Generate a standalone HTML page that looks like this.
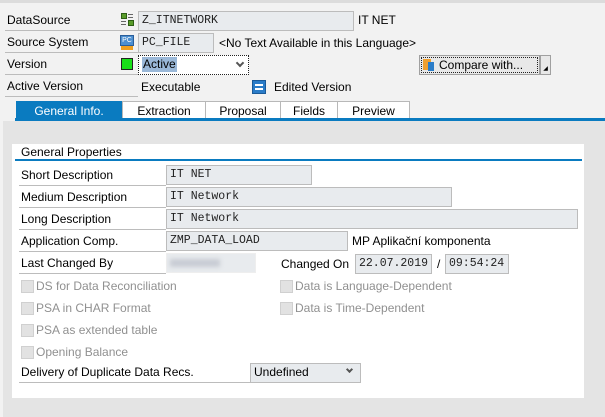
<!DOCTYPE html>
<html><head><meta charset="utf-8"><style>
*{margin:0;padding:0;box-sizing:border-box}
body{width:605px;height:417px;background:#f2f2f2;font-family:"Liberation Sans",sans-serif;font-size:12px;color:#000;position:relative;overflow:hidden}
.a{position:absolute;white-space:nowrap}
.lbl{position:absolute;border-bottom:1px solid #bcbcbc;height:21px;line-height:21px;padding-left:2px}
.fld{position:absolute;background:#e8ebee;border:1px solid #bcbcbc;height:20px;line-height:18px;padding-left:3px;font-family:"Liberation Mono",monospace;font-size:11.5px;color:#222}
.tab{position:absolute;top:101px;height:18px;line-height:18px;text-align:center;border:1px solid #b8b8b8;border-bottom:none;background:#fff}
.cb{position:absolute;width:13px;height:13px;background:#e2e2e2;border:1px solid #d0d0d0}
.g{color:#909090}
.chev{position:absolute;width:6px;height:6px;border-right:2px solid #555;border-bottom:2px solid #555;transform:rotate(45deg)}
</style></head><body>
<div class="a" style="left:0;top:0;width:605px;height:3px;background:#dcdcdc"></div>
<div class="lbl" style="left:5px;top:10px;width:133px">DataSource</div>
<div class="lbl" style="left:5px;top:32px;width:133px">Source System</div>
<div class="lbl" style="left:5px;top:54px;width:133px">Version</div>
<div class="lbl" style="left:5px;top:76px;width:133px">Active Version</div>
<div class="a" style="left:121px;top:13px;width:6px;height:6px;background:#5a9c2a;border:1px solid #2d5e14"></div>
<div class="a" style="left:128px;top:20px;width:6px;height:6px;background:#5a9c2a;border:1px solid #2d5e14"></div>
<div class="a" style="left:128px;top:14px;width:5px;height:4px;border-top:1px solid #666;border-bottom:1px solid #666"></div>
<div class="a" style="left:121px;top:21px;width:5px;height:4px;border-top:1px solid #666;border-bottom:1px solid #666"></div>
<div class="a" style="left:120px;top:35px;width:14px;height:11px;background:#4c8fd0;border:1px solid #2a5e9a;color:#fff;font-size:7px;line-height:9px;text-align:center">PC</div>
<div class="a" style="left:121px;top:46px;width:12px;height:4px;background:#f0a020"></div>
<div class="a" style="left:121px;top:58px;width:12px;height:12px;background:#18e018;border:1px solid #222"></div>
<div class="fld" style="left:138px;top:11px;width:216px">Z_ITNETWORK</div>
<div class="a" style="left:358px;top:13px">IT NET</div>
<div class="fld" style="left:138px;top:33px;width:76px">PC_FILE</div>
<div class="a" style="left:219px;top:36px">&lt;No Text Available in this Language&gt;</div>
<div class="a" style="left:138px;top:55px;width:111px;height:20px;background:#fff;border:1px dotted #222"></div>
<div class="a" style="left:142px;top:57px;height:15px;line-height:15px;background:#9ab8d8;padding:0 1px">Active</div>
<div class="chev" style="left:237px;top:60px"></div>
<div class="a" style="left:419px;top:55px;width:121px;height:20px;border:1px solid #a0a0a0;background:#e8e8e8"></div>
<div class="a" style="left:421px;top:57px;width:117px;height:16px;border:1px dotted #222"></div>
<div class="a" style="left:423px;top:59px;width:8px;height:11px;background:#f0a030"></div>
<div class="a" style="left:428px;top:62px;width:6px;height:9px;background:#2a7cc8"></div>
<div class="a" style="left:439px;top:58px">Compare with...</div>
<div class="a" style="left:540px;top:55px;width:11px;height:20px;border:1px solid #a0a0a0;background:#e8e8e8;font-size:6px;line-height:26px;text-align:center">&#9698;</div>
<div class="a" style="left:141px;top:80px">Executable</div>
<div class="a" style="left:252px;top:80px;width:14px;height:14px;background:#2a7cc8;border:1px solid #1a5a98"></div>
<div class="a" style="left:255px;top:84px;width:8px;height:2px;background:#fff"></div>
<div class="a" style="left:255px;top:88px;width:8px;height:2px;background:#fff"></div>
<div class="a" style="left:274px;top:80px">Edited Version</div>
<div class="tab" style="left:16px;width:106px;background:#0a7bc0;color:#fff;border-color:#0a7bc0">General Info.</div>
<div class="tab" style="left:122px;width:84px">Extraction</div>
<div class="tab" style="left:205px;width:76px">Proposal</div>
<div class="tab" style="left:280px;width:58px">Fields</div>
<div class="tab" style="left:337px;width:73px">Preview</div>
<div class="a" style="left:15px;top:118px;width:590px;height:3px;background:#0a7bc0"></div>
<div class="a" style="left:3px;top:121px;width:602px;height:296px;background:#e4e4e4"></div>
<div class="a" style="left:12px;top:144px;width:572px;height:254px;background:#fff"></div>
<div class="a" style="left:21px;top:145px">General Properties</div>
<div class="a" style="left:15px;top:159px;width:567px;height:2px;background:#0a7bc0"></div>
<div class="lbl" style="left:19px;top:165px;width:147px">Short Description</div>
<div class="lbl" style="left:19px;top:187px;width:147px">Medium Description</div>
<div class="lbl" style="left:19px;top:209px;width:147px">Long Description</div>
<div class="lbl" style="left:19px;top:231px;width:147px">Application Comp.</div>
<div class="lbl" style="left:19px;top:253px;width:147px">Last Changed By</div>
<div class="fld" style="left:166px;top:165px;width:146px">IT NET</div>
<div class="fld" style="left:166px;top:187px;width:286px">IT Network</div>
<div class="fld" style="left:166px;top:209px;width:412px">IT Network</div>
<div class="fld" style="left:166px;top:231px;width:182px">ZMP_DATA_LOAD</div>
<div class="a" style="left:352px;top:234px">MP Aplikační komponenta</div>
<div class="fld" style="left:166px;top:253px;width:90px;border-color:#eee"></div>
<div class="a" style="left:170px;top:259px;width:50px;height:8px;background:#c8ccd4;filter:blur(2px)"></div>
<div class="a" style="left:281px;top:257px">Changed On</div>
<div class="fld" style="left:355px;top:254px;width:77px">22.07.2019</div>
<div class="a" style="left:437px;top:257px">/</div>
<div class="fld" style="left:445px;top:254px;width:64px">09:54:24</div>
<div class="cb" style="left:21px;top:280px"></div><div class="a g" style="left:36px;top:279px">DS for Data Reconciliation</div>
<div class="cb" style="left:21px;top:302px"></div><div class="a g" style="left:36px;top:301px">PSA in CHAR Format</div>
<div class="cb" style="left:21px;top:324px"></div><div class="a g" style="left:36px;top:323px">PSA as extended table</div>
<div class="cb" style="left:21px;top:346px"></div><div class="a g" style="left:36px;top:345px">Opening Balance</div>
<div class="cb" style="left:280px;top:280px"></div><div class="a g" style="left:295px;top:279px">Data is Language-Dependent</div>
<div class="cb" style="left:280px;top:302px"></div><div class="a g" style="left:295px;top:301px">Data is Time-Dependent</div>
<div class="lbl" style="left:19px;top:362px;width:231px">Delivery of Duplicate Data Recs.</div>
<div class="fld" style="left:250px;top:363px;width:111px;font-family:'Liberation Sans',sans-serif;font-size:12px;color:#000;height:20px;line-height:17px">Undefined</div>
<div class="chev" style="left:347px;top:367px;width:5px;height:5px"></div>
</body></html>
